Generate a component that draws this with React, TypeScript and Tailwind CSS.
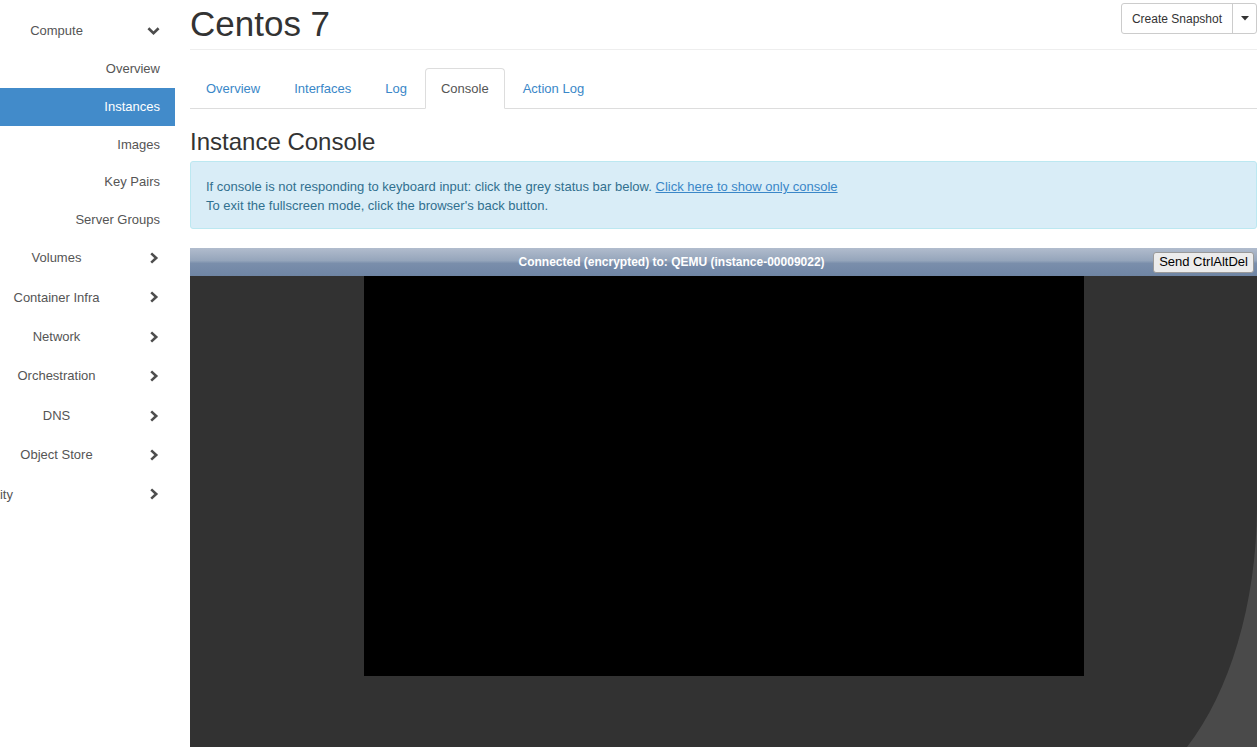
import React from 'react';

const subItems = ['Overview', 'Instances', 'Images', 'Key Pairs', 'Server Groups'];
const mainItems = ['Volumes', 'Container Infra', 'Network', 'Orchestration', 'DNS', 'Object Store'];
const tabs = ['Overview', 'Interfaces', 'Log', 'Console', 'Action Log'];

function ChevronRightIcon() {
  return (
    <svg width="10" height="12" viewBox="0 0 10 12">
      <path d="M2.2 1.4 L7.2 6 L2.2 10.6" fill="none" stroke="#4d4d4d" strokeWidth="2.6" />
    </svg>
  );
}

function ChevronDownIcon() {
  return (
    <svg width="13" height="10" viewBox="0 0 13 10">
      <path d="M1.4 2.2 L6.5 7.2 L11.6 2.2" fill="none" stroke="#4d4d4d" strokeWidth="2.6" />
    </svg>
  );
}

function Sidebar() {
  return (
    <div className="w-[175px] shrink-0 h-[747px] bg-white overflow-hidden pt-[11px] text-[13px] text-[#555]">
      {/* Compute */}
      <div className="flex items-center h-[39.4px]">
        <span className="w-[113px] text-center">Compute</span>
        <span className="ml-[34px] flex">
          <ChevronDownIcon />
        </span>
      </div>
      {subItems.map((item) => (
        <div
          key={item}
          className={`flex items-center justify-end h-[37.6px] pr-[15px] ${
            item === 'Instances' ? 'bg-[#428bca] text-white' : ''
          }`}
        >
          {item}
        </div>
      ))}
      {mainItems.map((item) => (
        <div key={item} className="flex items-center h-[39.4px]">
          <span className="w-[113px] text-center">{item}</span>
          <span className="ml-[36px] flex">
            <ChevronRightIcon />
          </span>
        </div>
      ))}
      {/* partly scrolled out of view, as in the source */}
      <div className="flex items-center h-[39.4px]">
        <span className="w-[113px] -ml-[29px] whitespace-nowrap">Identity</span>
        <span className="ml-[65px] flex">
          <ChevronRightIcon />
        </span>
      </div>
    </div>
  );
}

export default function App() {
  return (
    <div className="flex w-[1259px] h-[747px] overflow-hidden bg-white font-['Liberation_Sans',Arial,sans-serif]">
      <Sidebar />
      <div className="flex-1 min-w-0 pl-[15px] pr-[2px]">
        {/* Page header */}
        <div className="flex justify-between items-start h-[50px] border-b border-[#eee]">
          <h1 className="mt-[4px] text-[35px] leading-[40px] font-medium text-[#333]">Centos 7</h1>
          <div className="mt-[3px] flex h-[31px] border border-[#ccc] rounded-[3px] text-[12px] text-[#333] bg-white">
            <span className="flex items-center px-[10px] border-r border-[#ccc]">Create Snapshot</span>
            <span className="flex items-center justify-center w-[23px]">
              <svg width="8" height="5" viewBox="0 0 8 5">
                <path d="M0 0 L8 0 L4 4.5 Z" fill="#333" />
              </svg>
            </span>
          </div>
        </div>

        {/* Tabs */}
        <div className="mt-[18px] flex border-b border-[#ddd] h-[41px] text-[13px]">
          {tabs.map((tab) => (
            <div
              key={tab}
              className={`flex items-center px-[15px] mr-[2px] h-[41px] rounded-t-[4px] ${
                tab === 'Console'
                  ? 'border border-[#ddd] border-b-white bg-white text-[#555]'
                  : 'border border-transparent text-[#3a87c8]'
              }`}
            >
              {tab}
            </div>
          ))}
        </div>

        <h2 className="mt-[20px] text-[24px] leading-[26px] font-medium text-[#333]">Instance Console</h2>

        {/* Info alert */}
        <div className="mt-[6px] border border-[#bce8f1] bg-[#d9edf7] rounded-[3px] px-[15px] pt-[15px] pb-[13px] text-[13px] leading-[19px] text-[#31708f]">
          <div>
            If console is not responding to keyboard input: click the grey status bar below.{' '}
            <span className="underline text-[#3a87c8]">Click here to show only console</span>
          </div>
          <div>To exit the fullscreen mode, click the browser's back button.</div>
        </div>

        {/* noVNC console */}
        <div className="mt-[19px]">
          <div className="flex items-center h-[28px] bg-[linear-gradient(to_bottom,#b1bccd_0%,#95a5bb_45%,#7a8eab_55%,#6f85a4_100%)]">
            <div className="flex-1 text-center text-white text-[12px] font-bold">
              Connected (encrypted) to: QEMU (instance-00009022)
            </div>
            <div className="mr-[3px] h-[21px] px-[5px] flex items-center rounded-[3px] border border-[#9a9a9a] bg-[#ececec] text-[13px] text-black">
              Send CtrlAltDel
            </div>
          </div>
          <div className="relative h-[471px] bg-[#323232] flex justify-center">
            <div className="w-[720px] h-[400px] bg-black" />
            <svg className="absolute right-0 bottom-0" width="72" height="245" viewBox="0 0 72 245">
              <path d="M72 3 C72 100 45 190 2 245 L72 245 Z" fill="#4a4a4a" />
            </svg>
          </div>
        </div>
      </div>
    </div>
  );
}
